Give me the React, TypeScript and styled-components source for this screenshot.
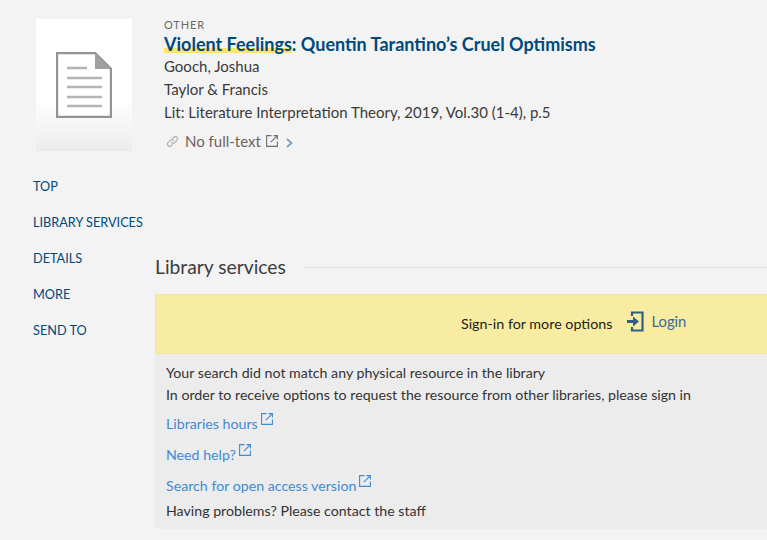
import React from 'react';
import styled, { createGlobalStyle } from 'styled-components';

const GlobalStyle = createGlobalStyle`
  html, body {
    margin: 0;
    height: 540px;
    overflow: hidden;
    background: #f3f3f3;
    font-family: 'Lato', 'Noto Sans', sans-serif;
    color: #3a3a3a;
  }
`;

const Page = styled.div`
  width: 767px;
  height: 540px;
  overflow: hidden;
`;

const RecordRow = styled.div`
  display: flex;
  padding: 19px 0 0 36px;
`;

const Thumb = styled.div`
  width: 96px;
  height: 132px;
  flex: none;
  display: flex;
  justify-content: center;
  align-items: flex-start;
  padding-top: 33px;
  box-sizing: border-box;
  background: linear-gradient(#fff 0%, #fff 62%, #ebebeb 100%);
`;

const RecordInfo = styled.div`
  margin: -1px 0 0 32px;
  display: flex;
  flex-direction: column;
`;

const TypeLabel = styled.div`
  font-size: 11px;
  line-height: 13px;
  letter-spacing: 0.9px;
  color: #6a6a6a;
`;

const Title = styled.div`
  padding-top: 2px;
  font-size: 18px;
  line-height: 22px;
  font-weight: 700;
  color: #00497c;
  white-space: nowrap;
`;

const Highlight = styled.span`
  background: linear-gradient(transparent 15px, #ffe566 15px, #ffe566 20px, transparent 20px);
`;

const MetaLine = styled.div`
  font-size: 15px;
  line-height: 23px;
  color: #3a3a3a;
  white-space: nowrap;
`;

const Availability = styled.div`
  display: flex;
  align-items: center;
  margin: 6px 0 0 2px;
  font-size: 15px;
  line-height: 22px;
  color: #6e6260;
`;

const AvailabilityText = styled.span`
  margin: 0 5px 0 6px;
`;

const Body = styled.div`
  display: flex;
`;

const Side = styled.nav`
  width: 122px;
  margin-left: 33px;
  padding-top: 25px;
  flex: none;
  display: flex;
  flex-direction: column;
`;

const SideLink = styled.a`
  height: 36px;
  font-size: 12.7px;
  line-height: 18px;
  color: #00497c;
  white-space: nowrap;
`;

const Content = styled.div`
  flex: 1;
  min-width: 0;
  padding-top: 102px;
`;

const SectionHead = styled.div`
  display: flex;
  align-items: center;
  gap: 19px;
  height: 26px;
`;

const SectionTitle = styled.h2`
  margin: 0;
  font-size: 19.3px;
  line-height: 26px;
  font-weight: 400;
  color: #3d3d3d;
`;

const Rule = styled.div`
  flex: 1;
  height: 1px;
  background: #dcdcdc;
`;

const Panel = styled.div`
  margin-top: 14px;
  border-radius: 3px 0 0 3px;
  background: #ececec;
  height: 235px;
`;

const LoginBar = styled.div`
  height: 60px;
  box-sizing: border-box;
  border: 1px solid #efe5a0;
  border-right: 0;
  background: #f7eca1;
  display: flex;
  align-items: center;
  padding: 0 0 2px 305px;
  font-size: 14.3px;
  color: #1c1c1c;
`;

const LoginLink = styled.a`
  display: flex;
  align-items: center;
  margin: -3px 0 0 15px;
  gap: 7px;
  color: #3a6a93;
  font-size: 14.8px;
`;

const LoginLabel = styled.span`
  margin-top: -1px;
`;

const PanelBody = styled.div`
  padding: 8px 11px 0;
`;

const PlainLine = styled.div`
  font-size: 14.2px;
  line-height: 22px;
  color: #333;
  white-space: nowrap;
`;

const LinkList = styled.div`
  display: flex;
  flex-direction: column;
  gap: 6px;
  margin-top: 7px;
`;

const ExternalLink = styled.a`
  display: flex;
  align-items: flex-start;
  height: 25px;
  font-size: 14.2px;
  line-height: 22px;
  color: #3f8ad4;
  gap: 3px;
`;

const ExternalIcon = ({ color = 'currentColor' }: { color?: string }) => (
  <svg width="12" height="12" viewBox="0 0 12 12" fill="none" stroke={color} strokeWidth="1.1">
    <path d="M5.5.6H.6v10.8h10.8V6.5" />
    <path d="M7.5.6h3.9v3.9M11.2.8 4.8 7.2" />
  </svg>
);

const DocIcon = () => (
  <svg width="56" height="66" viewBox="0 0 56 66">
    <path d="M1 1h38l16 16v48H1z" fill="#fff" stroke="#939393" strokeWidth="2.4" />
    <path d="M39 1v16h16z" fill="#a0a0a0" />
    <path d="M11 16h20M11 26h35M11 35h35M11 45h35M11 54h35" stroke="#b4b4b4" strokeWidth="2.4" />
  </svg>
);

const LinkIcon = () => (
  <svg width="13" height="13" viewBox="0 0 14 14" fill="none" stroke="#b5b5b5" strokeWidth="1.4" strokeLinecap="round">
    <path d="M6 8.2a2.4 2.4 0 0 0 3.4 0l2.4-2.4a2.4 2.4 0 0 0-3.4-3.4L7.3 3.5" />
    <path d="M8 5.8a2.4 2.4 0 0 0-3.4 0L2.2 8.2a2.4 2.4 0 0 0 3.4 3.4l1.1-1.1" />
  </svg>
);

const ChevronIcon = styled.svg`
  margin: 3px 0 0 8px;
`;

const Chevron = () => (
  <ChevronIcon width="7" height="10" viewBox="0 0 7 10" fill="none" stroke="#7f9fbb" strokeWidth="1.8">
    <path d="M1 1l4.5 4L1 9" />
  </ChevronIcon>
);

const LoginIcon = () => (
  <svg width="17" height="21" viewBox="0 0 17 21" fill="none">
    <path d="M5 5V1.5h10.5v18H5V16" stroke="#2f5f88" strokeWidth="2.2" />
    <path d="M0 9h6V5.5l6 5-6 5V12H0z" fill="#2f5f88" />
  </svg>
);

const sections = ['TOP', 'LIBRARY SERVICES', 'DETAILS', 'MORE', 'SEND TO'];
const links = ['Libraries hours', 'Need help?', 'Search for open access version'];

export default function App() {
  return (
    <Page>
      <GlobalStyle />
      <RecordRow>
        <Thumb>
          <DocIcon />
        </Thumb>
        <RecordInfo>
          <TypeLabel>OTHER</TypeLabel>
          <Title>
            <Highlight>Violent Feelings</Highlight>: Quentin Tarantino’s Cruel Optimisms
          </Title>
          <MetaLine>Gooch, Joshua</MetaLine>
          <MetaLine>Taylor &amp; Francis</MetaLine>
          <MetaLine>Lit: Literature Interpretation Theory, 2019, Vol.30 (1-4), p.5</MetaLine>
          <Availability>
            <LinkIcon />
            <AvailabilityText>No full-text</AvailabilityText>
            <ExternalIcon color="#6e6e6e" />
            <Chevron />
          </Availability>
        </RecordInfo>
      </RecordRow>
      <Body>
        <Side>
          {sections.map((s) => (
            <SideLink key={s}>{s}</SideLink>
          ))}
        </Side>
        <Content>
          <SectionHead>
            <SectionTitle>Library services</SectionTitle>
            <Rule />
          </SectionHead>
          <Panel>
            <LoginBar>
              Sign-in for more options
              <LoginLink>
                <LoginIcon />
                <LoginLabel>Login</LoginLabel>
              </LoginLink>
            </LoginBar>
            <PanelBody>
              <PlainLine>Your search did not match any physical resource in the library</PlainLine>
              <PlainLine>In order to receive options to request the resource from other libraries, please sign in</PlainLine>
              <LinkList>
                {links.map((l) => (
                  <ExternalLink key={l}>
                    {l}
                    <ExternalIcon />
                  </ExternalLink>
                ))}
              </LinkList>
              <PlainLine>Having problems? Please contact the staff</PlainLine>
            </PanelBody>
          </Panel>
        </Content>
      </Body>
    </Page>
  );
}
